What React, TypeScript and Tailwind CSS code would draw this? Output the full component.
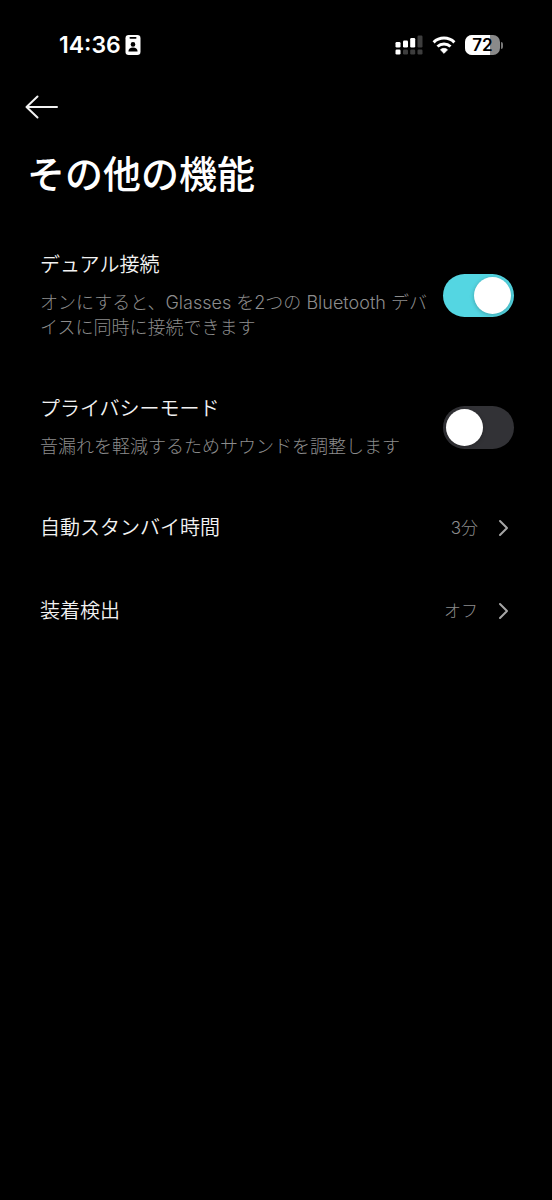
import { useId, useState } from "react";

function IdCardIcon() {
  return (
    <svg viewBox="0 0 16 20" className="h-5 w-4" aria-hidden="true">
      <rect x="0.5" y="0" width="15" height="20" rx="3.2" fill="#fff" />
      <rect x="4.5" y="2" width="7" height="1.7" rx="0.8" fill="#000" />
      <circle cx="8" cy="9.4" r="2.3" fill="#000" />
      <path d="M3.4 16.6c0-2.6 2-4 4.6-4s4.6 1.4 4.6 4z" fill="#000" />
    </svg>
  );
}

function SignalIcon() {
  return (
    <svg viewBox="0 0 28 20" className="h-5 w-7" aria-hidden="true">
      <g fill="#fff">
        <rect x="0.5" y="7" width="5" height="5.5" rx="1.2" />
        <rect x="8" y="5.5" width="5" height="7" rx="1.2" />
        <rect x="15.2" y="3" width="5" height="9.5" rx="1.2" />
        <rect x="0.5" y="14.5" width="5" height="5" rx="1.2" />
      </g>
      <g fill="#3d3d3d">
        <rect x="22.5" y="0.5" width="5" height="12" rx="1.2" />
        <rect x="8" y="14.5" width="5" height="5" rx="1.2" />
        <rect x="15.2" y="14.5" width="5" height="5" rx="1.2" />
        <rect x="22.5" y="14.5" width="5" height="5" rx="1.2" />
      </g>
    </svg>
  );
}

function WifiIcon() {
  return (
    <svg viewBox="0 0 24 18" className="h-[18px] w-6" aria-hidden="true">
      <g fill="none" stroke="#fff" strokeWidth="3">
        <path d="M1.6 6.3a15 15 0 0 1 20.8 0" />
        <path d="M5.5 10.5a9.4 9.4 0 0 1 13 0" />
      </g>
      <path d="M12 17.4l-3.6-3.6a5.2 5.2 0 0 1 7.2 0z" fill="#fff" stroke="#fff" strokeWidth="0.6" strokeLinejoin="round" />
    </svg>
  );
}

function Battery({ level }: { level: number }) {
  return (
    <div className="flex items-center gap-px">
      <div className="relative flex h-5 w-[35px] items-center justify-center overflow-hidden rounded-[7px] bg-[#8a8a8a]">
        <div className="absolute inset-y-0 left-0 bg-white" style={{ width: `${level}%` }} />
        <span className="relative text-[17px] leading-5 font-semibold text-black">{level}</span>
      </div>
      <div className="h-[7px] w-0.5 rounded-r-full bg-[#777]" />
    </div>
  );
}

function StatusBar() {
  return (
    <div className="flex h-[90px] items-center justify-between pr-[49px] pl-[59px]">
      <div className="flex items-center gap-1 text-[23px] leading-7 font-semibold">
        <span>14:36</span>
        <IdCardIcon />
      </div>
      <div className="flex items-center gap-[9px]">
        <SignalIcon />
        <WifiIcon />
        <Battery level={72} />
      </div>
    </div>
  );
}

type ToggleRowProps = { title: string; description: string; initial: boolean };

function ToggleRow({ title, description, initial }: ToggleRowProps) {
  const id = useId();
  const [on, setOn] = useState(initial);
  return (
    <div className="flex items-center justify-between gap-4">
      <div className="min-w-0 flex-1">
        <label htmlFor={id} className="block text-xl leading-7 font-[350] text-[#f2f2f2]">
          {title}
        </label>
        <p id={`${id}-description`} className="mt-[11px] text-lg leading-[25px] font-light text-[#8c8c8c]">
          {description}
        </p>
      </div>
      <span className="relative flex h-[43px] w-[71px] shrink-0">
        <input
          id={id}
          type="checkbox"
          role="switch"
          aria-describedby={`${id}-description`}
          checked={on}
          onChange={(e) => setOn(e.target.checked)}
          className="peer h-full w-full cursor-pointer appearance-none rounded-full bg-[#323236] checked:bg-[#54d6e2]"
        />
        <span className="pointer-events-none absolute top-[3px] left-[3px] size-[37px] rounded-full bg-white shadow-[0_1px_4px_rgba(0,0,0,0.25)] peer-checked:right-[3px] peer-checked:left-auto" />
      </span>
    </div>
  );
}

function LinkRow({ title, value }: { title: string; value: string }) {
  return (
    <button type="button" className="flex w-full cursor-pointer items-center justify-between text-left">
      <span className="text-xl leading-7 font-[350] text-[#f2f2f2]">{title}</span>
      <span className="flex items-center gap-5 pr-1">
        <span className="text-[17px] leading-7 font-light text-[#8c8c8c]">{value}</span>
        <svg viewBox="0 0 12 18" className="h-[18px] w-3" aria-hidden="true">
          <path d="M2 2l7 7-7 7" fill="none" stroke="#a6a6a6" strokeWidth="2" strokeLinecap="round" strokeLinejoin="round" />
        </svg>
      </span>
    </button>
  );
}

export default function App() {
  return (
    <div lang="ja" className="min-h-screen bg-black font-['Inter','Noto_Sans_CJK_JP',sans-serif] text-white">
      <StatusBar />
      <header className="px-[25px]">
        <button type="button" aria-label="戻る" className="flex h-[34px] cursor-pointer items-center">
          <svg viewBox="0 0 34 26" className="h-[26px] w-[34px]" aria-hidden="true">
            <path d="M12.5 2.5L1.5 13l11 10.5M1.5 13H32" fill="none" stroke="#f2f2f2" strokeWidth="2" strokeLinecap="round" strokeLinejoin="round" />
          </svg>
        </button>
        <h1 className="mt-[26px] pl-0.5 text-[38px] leading-[48px] font-medium">その他の機能</h1>
      </header>
      <main className="flex flex-col gap-[55px] pt-[53px] pr-[38px] pb-10 pl-10">
        <ToggleRow title="デュアル接続" description="オンにすると、Glasses を2つの Bluetooth デバイスに同時に接続できます" initial />
        <ToggleRow title="プライバシーモード" description="音漏れを軽減するためサウンドを調整します" initial={false} />
        <LinkRow title="自動スタンバイ時間" value="3分" />
        <LinkRow title="装着検出" value="オフ" />
      </main>
    </div>
  );
}
